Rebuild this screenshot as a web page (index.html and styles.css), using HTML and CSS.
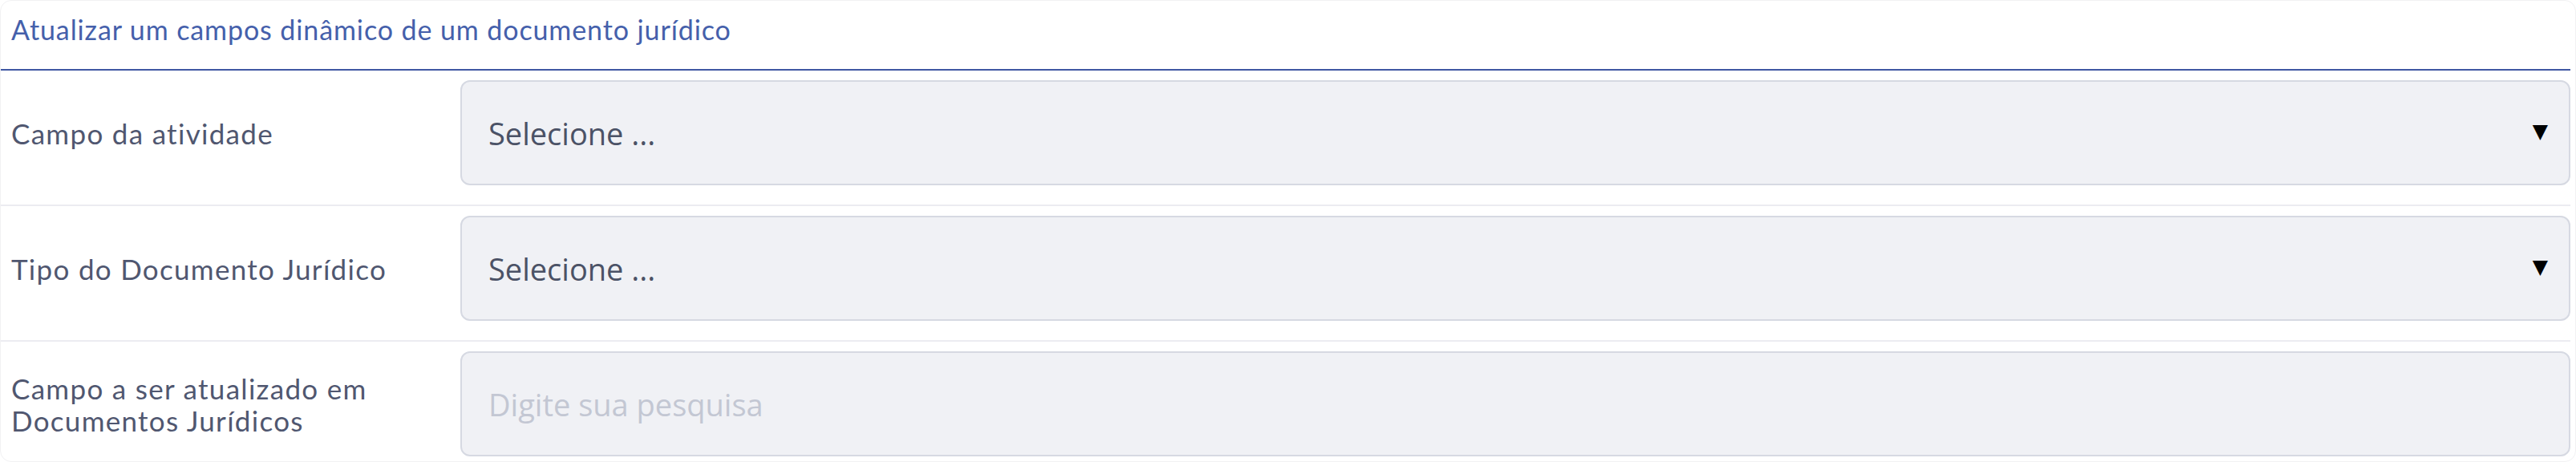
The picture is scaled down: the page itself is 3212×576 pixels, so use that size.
FILE: index.html
```html
<!DOCTYPE html>
<html lang="pt-BR">
<head>
<meta charset="utf-8">
<title>Atualizar campos dinâmicos</title>
<link rel="stylesheet" href="styles.css">
</head>
<body>
<div class="panel">
  <div class="panel-header">
    <h2 class="panel-title">Atualizar um campos dinâmico de um documento jurídico</h2>
  </div>
  <div class="form-row">
    <label class="form-label">Campo da atividade</label>
    <div class="field select">
      <span class="field-text">Selecione ...</span>
      <span class="caret">▼</span>
    </div>
  </div>
  <div class="form-row">
    <label class="form-label">Tipo do Documento Jurídico</label>
    <div class="field select">
      <span class="field-text">Selecione ...</span>
      <span class="caret">▼</span>
    </div>
  </div>
  <div class="form-row last">
    <label class="form-label">Campo a ser atualizado em<br>Documentos Jurídicos</label>
    <div class="field">
      <span class="field-text placeholder">Digite sua pesquisa</span>
    </div>
  </div>
</div>
</body>
</html>
```
FILE: styles.css
```css
html, body {
  margin: 0;
  padding: 0;
  background: #ffffff;
}

.panel {
  box-sizing: border-box;
  width: 3212px;
  height: 576px;
  padding: 0 6px 0 0;
  border: 1px solid #f1f1f3;
  border-radius: 14px;
  background: #ffffff;
  font-family: "Lato", "Open Sans", sans-serif;
}

.panel-header {
  height: 85px;
  border-bottom: 2px solid #3f58a3;
  display: flex;
  align-items: center;
  padding-left: 13px;
}

.panel-title {
  margin: 0;
  font-weight: 400;
  font-size: 34px;
  letter-spacing: 0.9px;
  color: #4560ab;
  padding-bottom: 14px;
}

.form-row {
  display: grid;
  grid-template-columns: 573px 1fr;
  align-items: center;
  padding: 12px 0 24px 0;
  border-bottom: 2px solid #ececf1;
}

.form-row.last {
  border-bottom: none;
}

.form-label {
  padding-left: 13px;
  font-size: 35px;
  line-height: 40px;
  letter-spacing: 1.3px;
  color: #505770;
}

.field {
  box-sizing: border-box;
  height: 131px;
  border: 2px solid #d6d9e2;
  border-radius: 12px;
  background: #f0f1f5;
  display: flex;
  align-items: center;
  justify-content: space-between;
  padding: 0 26px 0 33px;
  font-family: "Open Sans", sans-serif;
  font-size: 38px;
  color: #4b5266;
}

.placeholder {
  color: #c3c7d3;
}

.caret {
  font-family: "DejaVu Sans", sans-serif;
  font-size: 25px;
  color: #000000;
  padding-bottom: 4px;
}
```
